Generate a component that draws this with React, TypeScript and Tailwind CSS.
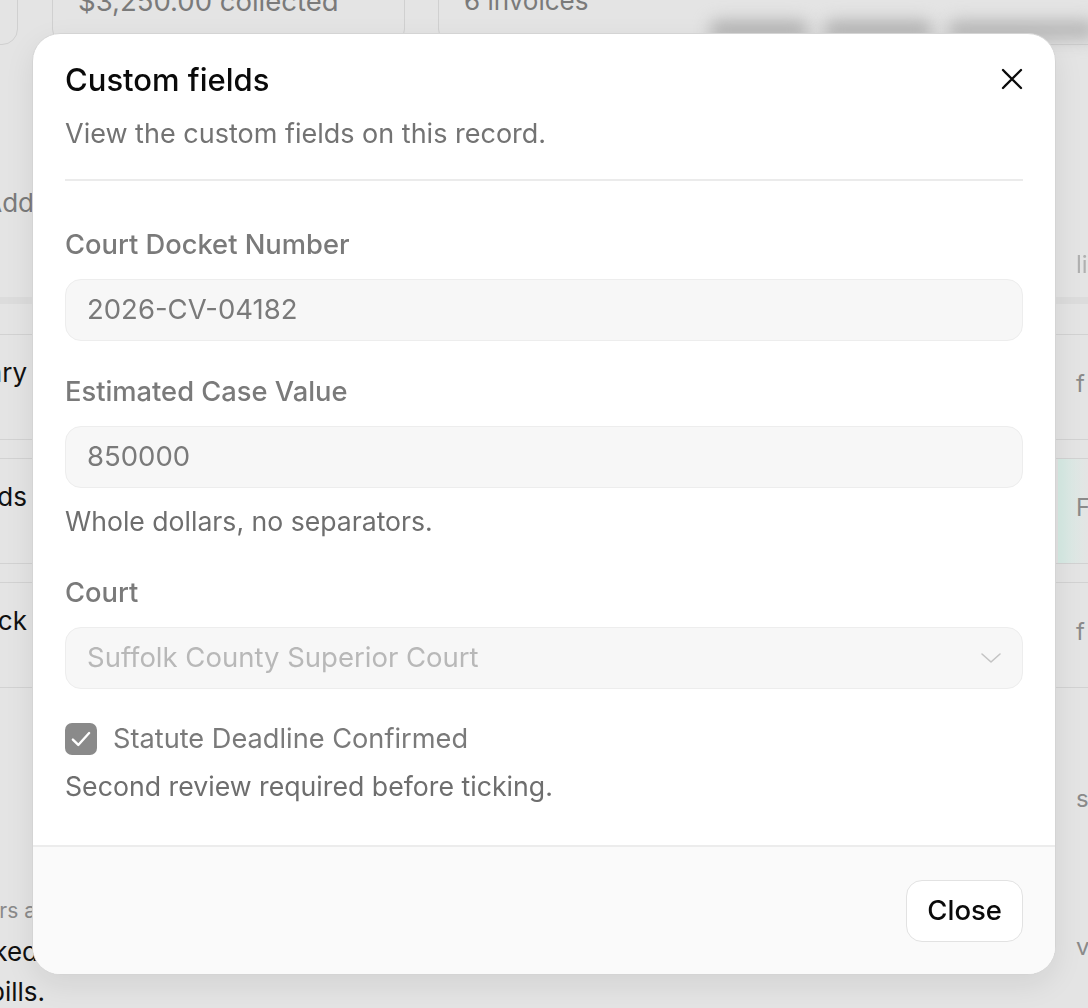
import React from "react";

function XIcon() {
  return (
    <svg width="24" height="24" viewBox="0 0 24 24" fill="none" stroke="currentColor" strokeWidth="2.3" strokeLinecap="round">
      <path d="M3 3l18 18M21 3L3 21" />
    </svg>
  );
}

function Chevron() {
  return (
    <svg width="22" height="14" viewBox="0 0 22 14" fill="none" stroke="currentColor" strokeWidth="1.6" strokeLinecap="round" strokeLinejoin="round">
      <path d="M2 3l9 8 9-8" />
    </svg>
  );
}

function Check() {
  return (
    <svg width="26" height="26" viewBox="0 0 24 24" fill="none" stroke="white" strokeWidth="2.2" strokeLinecap="round" strokeLinejoin="round">
      <path d="M4.5 12.5l5 5 10-11" />
    </svg>
  );
}

function Field({ label, children }: { label: string; children: React.ReactNode }) {
  return (
    <div className="flex flex-col">
      <div className="text-[27.3px] leading-[30px] font-medium text-[#7a7a7a]">{label}</div>
      {children}
    </div>
  );
}

export default function App() {
  return (
    <div className="relative h-[1008px] w-full overflow-hidden bg-[#e4e4e4] font-['Inter','Noto_Sans',sans-serif]">
      {/* top cards */}
      <div className="mt-[-40px] flex h-[85px] items-start">
        <div className="ml-[-40px] h-[85px] w-[58px] shrink-0 rounded-[16px] border border-[#d0d0d0]" />
        <div className="ml-[34px] h-[85px] w-[353px] shrink-0 rounded-[16px] border border-[#d0d0d0] px-[25px] pt-[23px] text-[27.5px] leading-[34px] text-[#7a7a7a] whitespace-nowrap">
          $3,250.00 collected
        </div>
        <div className="ml-[33px] h-[85px] w-[700px] shrink-0 rounded-[16px] border border-[#d0d0d0] pt-[23px] text-[26px] leading-[34px] text-[#7a7a7a] whitespace-nowrap">
          <div className="px-[25px]">6 invoices</div>
          <div className="mt-[2px] ml-[270px] flex gap-[14px]">
            <div className="h-[20px] w-[100px] rounded-full bg-[#b4b4b4] blur-[8px]" />
            <div className="h-[20px] w-[110px] rounded-full bg-[#b4b4b4] blur-[8px]" />
            <div className="h-[20px] w-[150px] rounded-full bg-[#b8b8b8] blur-[8px]" />
          </div>
        </div>
      </div>

      {/* table-ish rows */}
      <div className="flex flex-col">
        <div className="flex h-[252px] justify-between">
          <div className="flex w-[34px] justify-end whitespace-nowrap pt-[140px] text-[26px] leading-[36px] text-[#7a7a7a]">Add</div>
          <div className="w-[30px] overflow-hidden whitespace-nowrap pl-[18px] pt-[205px] text-[24px] leading-[30px] text-[#b0b0b0] blur-[0.6px]">lis</div>
        </div>
        <div className="h-[7px] bg-[#dcdcdc]" />
        <div className="h-[30px]" />
        {[
          ["Summary", "f"],
          ["Records", "F"],
          ["Track", "f"],
        ].map(([l, r], i) => (
          <div key={l} className={`flex h-[106px] justify-between border-y border-[#d2d2d2] ${i > 0 ? "mt-[18px]" : ""}`}>
            <div className="flex w-[27px] justify-end whitespace-nowrap pt-[20px] text-[26px] leading-[36px] text-[#111]">{l}</div>
            <div className={`w-[30px] overflow-hidden whitespace-nowrap pl-[18px] pt-[34px] text-[24px] leading-[30px] text-[#8a8a8a] ${i === 1 ? "bg-gradient-to-r from-[#d6ece5] to-[#e4e4e4]" : ""}`}>{r}</div>
          </div>
        ))}
        <div className="flex justify-between">
          <div className="flex flex-col pt-[208px]">
            <div className="flex w-[36px] justify-end whitespace-nowrap text-[21px] leading-[30px] text-[#8a8a8a]">Reminders a</div>
            <div className="mt-[8px] flex w-[38px] justify-end whitespace-nowrap text-[26px] leading-[36px] text-[#111]">marked</div>
            <div className="mt-[4px] flex w-[45px] justify-end whitespace-nowrap text-[26px] leading-[36px] text-[#111]">bills.</div>
          </div>
          <div className="flex w-[30px] flex-col overflow-hidden whitespace-nowrap pl-[18px] pt-[96px] text-[24px] leading-[30px] text-[#8a8a8a]">
            <div>s</div>
            <div className="mt-[118px]">v</div>
          </div>
        </div>
      </div>

      {/* modal */}
      <div className="fixed inset-0 flex items-center justify-center">
        <div className="flex h-[942px] w-[1024px] flex-col overflow-hidden rounded-[28px] border border-[#d4d4d4] bg-white shadow-[0_10px_30px_rgba(0,0,0,0.08)]">
          <div className="flex flex-1 flex-col px-[32px] pt-[28px]">
            <div className="flex items-start justify-between">
              <div className="flex flex-col">
                <h2 className="text-[31px] leading-[36px] font-medium text-[#0a0a0a]">Custom fields</h2>
                <p className="mt-[20px] text-[27px] leading-[32px] text-[#737373]">View the custom fields on this record.</p>
              </div>
              <button className="mt-[5px] mr-[-1px] text-[#0a0a0a]">
                <XIcon />
              </button>
            </div>
            <div className="mt-[29px] h-[2px] bg-[#ebebeb]" />

            <div className="mt-[49px] flex flex-col">
              <Field label="Court Docket Number">
                <div className="mt-[19px] flex h-[62px] items-center rounded-[16px] border border-[#ededed] bg-[#f7f7f7] px-[21px] text-[27.5px] text-[#7a7a7a]">
                  2026-CV-04182
                </div>
              </Field>
              <div className="mt-[36px]">
                <Field label="Estimated Case Value">
                  <div className="mt-[19px] flex h-[62px] items-center rounded-[16px] border border-[#ededed] bg-[#f7f7f7] px-[21px] text-[27.5px] text-[#7a7a7a]">
                    850000
                  </div>
                </Field>
              </div>
              <div className="mt-[18px] text-[26.6px] leading-[30px] text-[#6e6e6e]">Whole dollars, no separators.</div>
              <div className="mt-[42px]">
                <Field label="Court">
                  <div className="mt-[19px] flex h-[62px] items-center justify-between rounded-[16px] border border-[#ededed] bg-[#f7f7f7] pl-[21px] pr-[20px] text-[27.5px] text-[#b8b8b8]">
                    <span>Suffolk County Superior Court</span>
                    <span className="text-[#c4c4c4]">
                      <Chevron />
                    </span>
                  </div>
                </Field>
              </div>
              <div className="mt-[34px] flex items-center gap-[16px]">
                <div className="flex h-[32px] w-[32px] items-center justify-center rounded-[7px] bg-[#8a8a8a]">
                  <Check />
                </div>
                <span className="text-[27.2px] leading-[32px] text-[#7a7a7a]">Statute Deadline Confirmed</span>
              </div>
              <div className="mt-[16px] text-[26.7px] leading-[30px] text-[#6e6e6e]">Second review required before ticking.</div>
            </div>
          </div>
          <div className="flex h-[129px] items-center justify-end border-t-2 border-[#ececec] bg-[#fafafa] px-[32px]">
            <button className="flex h-[62px] items-center rounded-[16px] border border-[#e2e2e2] bg-white px-[20px] text-[27.5px] font-medium text-[#0a0a0a]">
              Close
            </button>
          </div>
        </div>
      </div>
    </div>
  );
}
